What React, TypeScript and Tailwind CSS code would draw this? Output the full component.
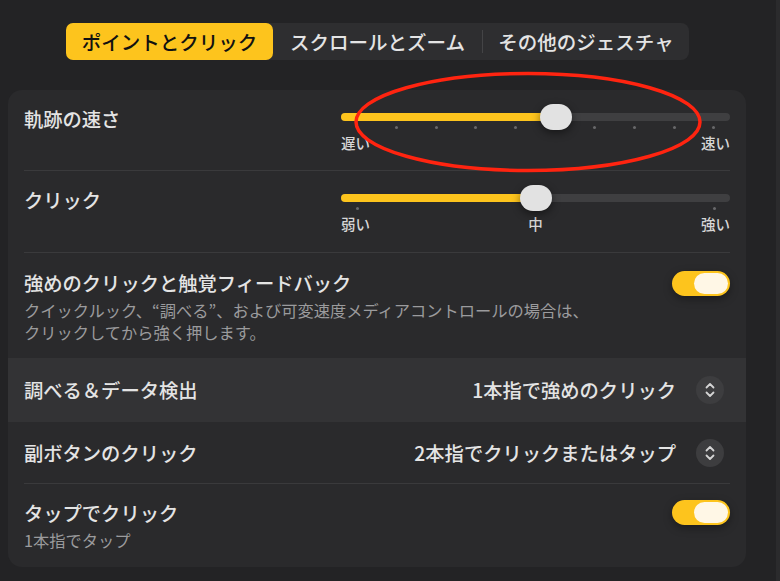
import React from "react";

const Divider = () => <div className="mx-[16px] h-px bg-[#3a3a3c]" />;

function Slider({
  thumb,
  ticks,
  labels,
}: {
  thumb: number;
  ticks: number;
  labels: string[];
}) {
  return (
    <div className="w-[389px] pt-[23px]">
      <div className="relative h-[8px] rounded-full bg-[#3f3f41]">
        <div
          className="absolute left-0 top-0 h-[8px] rounded-full bg-[#fdc41d]"
          style={{ width: thumb + 16 }}
        />
        <div
          className="absolute top-[-9px] h-[26px] w-[32px] rounded-full bg-[#e2e2e2] shadow-[0_3px_8px_rgba(0,0,0,0.45)]"
          style={{ left: thumb }}
        />
      </div>
      <div className="mt-[5px] flex h-[3px] justify-between px-[14.5px]">
        {Array.from({ length: ticks }).map((_, i) => (
          <div key={i} className="h-[3px] w-[3px] rounded-full bg-[#68686a]" />
        ))}
      </div>
      <div className="mt-[7px] flex justify-between text-[14.5px] font-medium leading-[14px] text-[#d6d6d6]">
        {labels.map((l) => (
          <span key={l}>{l}</span>
        ))}
      </div>
    </div>
  );
}

const Toggle = () => (
  <div className="flex h-[25px] w-[58px] items-center justify-end rounded-full bg-[#fdc41d] px-[2px] shadow-[0_3px_8px_rgba(0,0,0,0.35)]">
    <div className="h-[21px] w-[34px] rounded-full bg-[#fff7e6]" />
  </div>
);

const Stepper = () => (
  <div className="ml-[20px] mr-[6px] flex h-[28px] w-[28px] items-center justify-center rounded-full bg-[#3d3d3f]">
    <svg width="14" height="18" viewBox="0 0 14 18" fill="none">
      <path d="M3.5 6.5 L7 3 L10.5 6.5" stroke="#d4d4d4" strokeWidth="1.8" strokeLinecap="round" strokeLinejoin="round" />
      <path d="M3.5 11.5 L7 15 L10.5 11.5" stroke="#d4d4d4" strokeWidth="1.8" strokeLinecap="round" strokeLinejoin="round" />
    </svg>
  </div>
);

export default function App() {
  return (
    <div className="relative flex h-[581px] w-[780px] overflow-hidden bg-[#232325] font-['Noto_Sans_CJK_JP','Noto_Sans',sans-serif] text-[#e4e4e4]">
      <div className="w-[776px]">
        {/* Tabs */}
        <div className="ml-[66px] mt-[23px] flex h-[37px] w-[623px] items-center rounded-[8px] bg-[#2e2e30] text-[19.5px] font-medium">
          <div className="flex h-full w-[207px] items-center justify-center rounded-[7px] bg-[#fdc41d] text-[#111]">
            ポイントとクリック
          </div>
          <div className="flex h-full w-[209px] items-center justify-center">スクロールとズーム</div>
          <div className="h-[23px] w-px bg-[#444446]" />
          <div className="flex h-full w-[206px] items-center justify-center">その他のジェスチャ</div>
        </div>

        {/* Card */}
        <div className="ml-[8px] mt-[30px] h-[477px] w-[738px] overflow-hidden rounded-[14px] bg-[#2a2a2c] text-[19.3px] font-medium">
          <div className="flex h-[80px] justify-between px-[16px]">
            <div className="pt-[17px] leading-[24px]">軌跡の速さ</div>
            <Slider thumb={199} ticks={10} labels={["遅い", "速い"]} />
          </div>
          <Divider />
          <div className="flex h-[81px] justify-between px-[16px]">
            <div className="pt-[17px] leading-[24px]">クリック</div>
            <Slider thumb={179} ticks={3} labels={["弱い", "中", "強い"]} />
          </div>
          <Divider />
          <div className="flex h-[105px] justify-between px-[16px] pt-[18px]">
            <div>
              <div className="leading-[24px]">強めのクリックと触覚フィードバック</div>
              <div className="mt-[4px] text-[16.25px] font-normal leading-[22px] text-[#9b9b9d]">
                クイックルック、“調べる”、および可変速度メディアコントロールの場合は、
                <br />
                クリックしてから強く押します。
              </div>
            </div>
            <Toggle />
          </div>
          <div className="flex h-[64px] items-center bg-[#333335] px-[16px]">
            <div className="flex-1 leading-[24px]">調べる＆データ検出</div>
            <div className="leading-[24px]">1本指で強めのクリック</div>
            <Stepper />
          </div>
          <div className="flex h-[61px] items-center px-[16px]">
            <div className="flex-1 leading-[24px]">副ボタンのクリック</div>
            <div className="leading-[24px]">2本指でクリックまたはタップ</div>
            <Stepper />
          </div>
          <Divider />
          <div className="flex h-[83px] justify-between px-[16px] pt-[17px]">
            <div>
              <div className="leading-[24px]">タップでクリック</div>
              <div className="mt-[4px] text-[16.25px] font-normal leading-[22px] text-[#9b9b9d]">1本指でタップ</div>
            </div>
            <div className="-mt-[1px]">
              <Toggle />
            </div>
          </div>
        </div>
      </div>
      <div className="w-[4px] bg-[#2b2b2d]" />

      {/* Annotation */}
      <svg className="pointer-events-none absolute left-0 top-0" width="780" height="581">
        <ellipse cx="528" cy="122" rx="172" ry="48.5" fill="none" stroke="#ff2410" strokeWidth="3.5" />
      </svg>
    </div>
  );
}
